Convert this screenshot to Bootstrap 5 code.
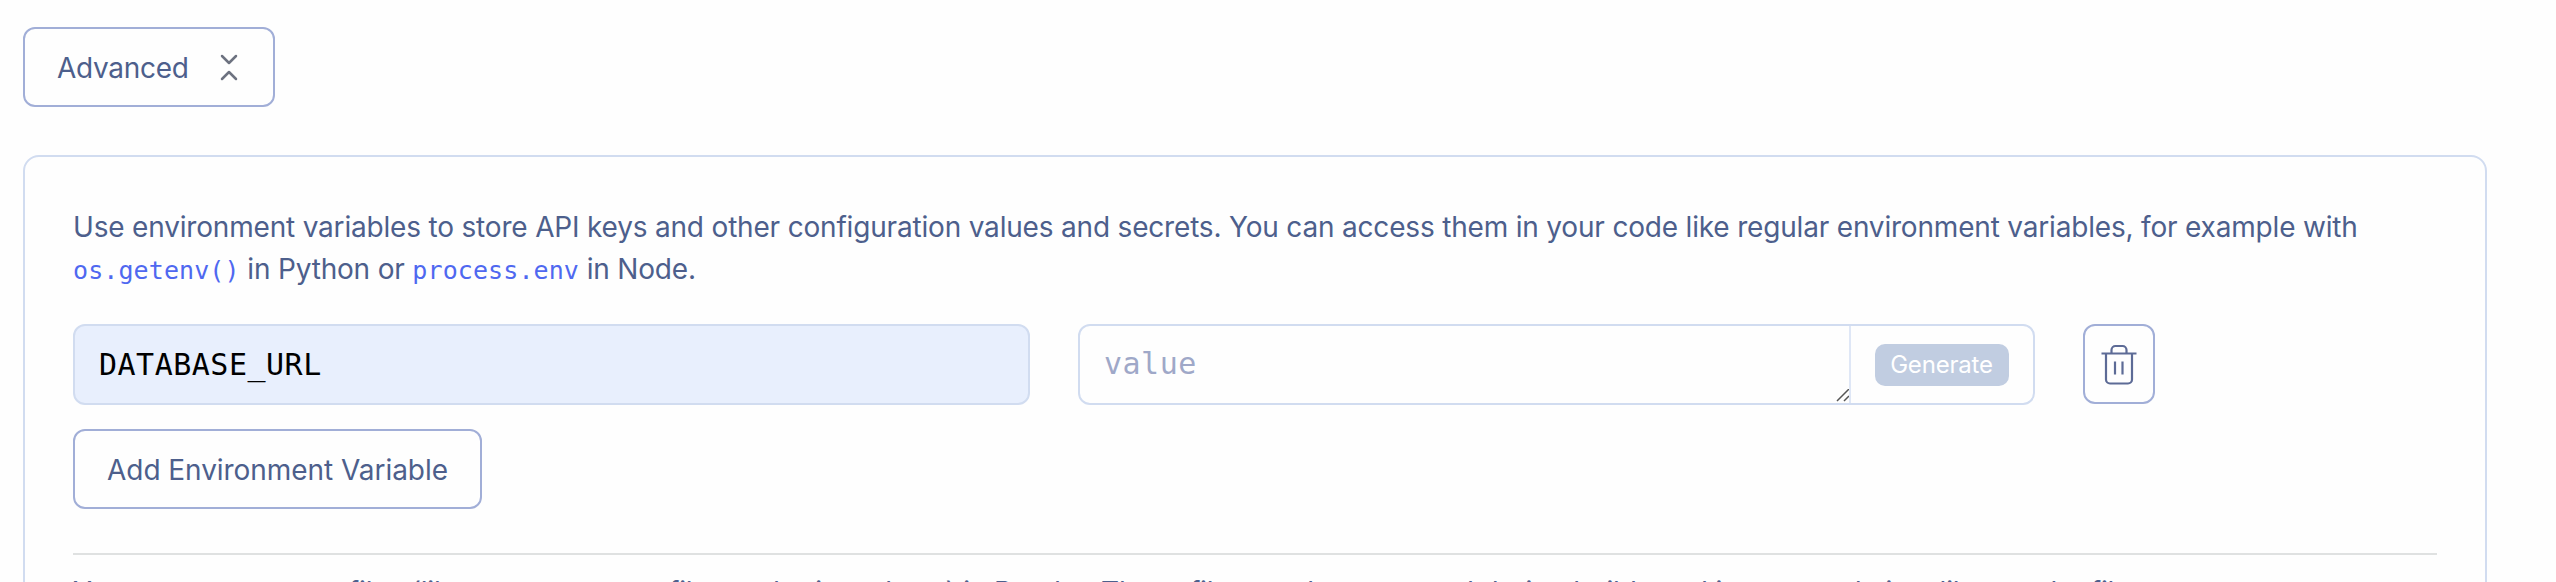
<!DOCTYPE html>
<html lang="en">
<head>
<meta charset="utf-8">
<title>Environment variables</title>
<link href="https://cdn.jsdelivr.net/npm/bootstrap@5.3.0/dist/css/bootstrap.min.css" rel="stylesheet">
<style>
body{font-family:Inter,"Liberation Sans",sans-serif;font-size:28px;line-height:42px;letter-spacing:-.185px;color:#4d5f8c;background:#fefefe;overflow:hidden;height:582px}
.page-wrap{padding:27px 69px 0 23px;height:582px;overflow:hidden}
.btn-outline-soft{--bs-btn-color:#4d5f8c;--bs-btn-border-color:#a1aed7;--bs-btn-bg:#fefefe;--bs-btn-border-width:2px;--bs-btn-border-radius:12px;font-size:28px;line-height:42px;height:80px;padding:2px 31px 0 32px;letter-spacing:-.3px}
.btn-adv{width:252px}
.btn-add{width:409px;margin-top:24px;padding:1px 0 0;white-space:nowrap;letter-spacing:-.05px}
.btn-trash{width:72px;padding:0}
.panel{border:2px solid #d1dcf0;border-radius:16px;margin-top:48px;height:460px;background:#fefefe;padding:49px 48px 0}
.intro,.files-note{white-space:nowrap;margin:0}
.mono{font-family:"DejaVu Sans Mono","Liberation Mono",monospace;letter-spacing:.1px}
.intro .mono{font-size:25px;color:#4f68f0}
.env-row{margin-top:32px;gap:48px;height:81px}
.env-field{width:957px;height:81px;border:2px solid #d1dcf0;border-radius:12px;background:#fefefe;overflow:hidden}
.env-key{background:#e8effd;color:#000;padding:0 24px;font-size:30px}
.env-key,.env-value{letter-spacing:.5px!important}
.env-value{width:771px;height:77px;border:0;border-right:2px solid #dfe7f6;color:#9fa8c8;padding:15px 24px;font-size:30px;line-height:46px}
.btn-gen{margin-left:24px;width:134px;height:42px;border-radius:10px;background:#c1cde1;color:#fff;font-size:24px;line-height:42px;text-align:center;padding-right:1px}
.rule{height:2px;background:#dfe1e1;margin:44px 0 16px}
.grip{margin-bottom:1px}
</style>
</head>
<body>
<main class="page-wrap">
  <button class="btn btn-outline-soft btn-adv d-flex align-items-center justify-content-between" type="button">
    <span>Advanced</span>
    <svg width="26" height="32" viewBox="0 0 26 32" fill="none" stroke="#6d7280" stroke-width="2.5" stroke-linecap="round" stroke-linejoin="round"><path d="M6 4l7 7 7-7M6 27l7-7 7 7"/></svg>
  </button>
  <section class="panel">
    <p class="intro">Use environment variables to store API keys and other configuration values and secrets. You can access them in your code like regular environment variables, for example with<br><span class="mono">os.getenv()</span> in Python or <span class="mono">process.env</span> in Node.</p>
    <div class="env-row d-flex">
      <div class="env-field env-key mono d-flex align-items-center">DATABASE_URL</div>
      <div class="env-field d-flex align-items-center">
        <div class="env-value mono position-relative">value
          <svg class="grip position-absolute bottom-0 end-0" width="13" height="13" viewBox="0 0 13 13" stroke="#555" stroke-width="1.5"><path d="M1 12L13 0M8 12l5-5"/></svg>
        </div>
        <div class="btn-gen">Generate</div>
      </div>
      <button class="btn btn-outline-soft btn-trash d-flex align-items-center justify-content-center" type="button" aria-label="Delete">
        <svg width="36" height="42" viewBox="0 0 36 42" fill="none" stroke="#5d6b96" stroke-width="2.2"><path d="M.5 10.500h35M10.500 10.500V7a4 4 0 0 1 4-4h7a4 4 0 0 1 4 4v3.500M5 10.500v26a4 4 0 0 0 4 4h18a4 4 0 0 0 4-4v-26M14 18.500v13M21.500 18.500v13"/></svg>
      </button>
    </div>
    <button class="btn btn-outline-soft btn-add" type="button">Add Environment Variable</button>
    <div class="rule"></div>
    <p class="files-note">You can store secret files (like .env or .npmrc files and private keys) in Render. These files can be accessed during builds and in your code just like regular files.</p>
  </section>
</main>
<script src="https://cdn.jsdelivr.net/npm/bootstrap@5.3.0/dist/js/bootstrap.bundle.min.js"></script>
</body>
</html>
